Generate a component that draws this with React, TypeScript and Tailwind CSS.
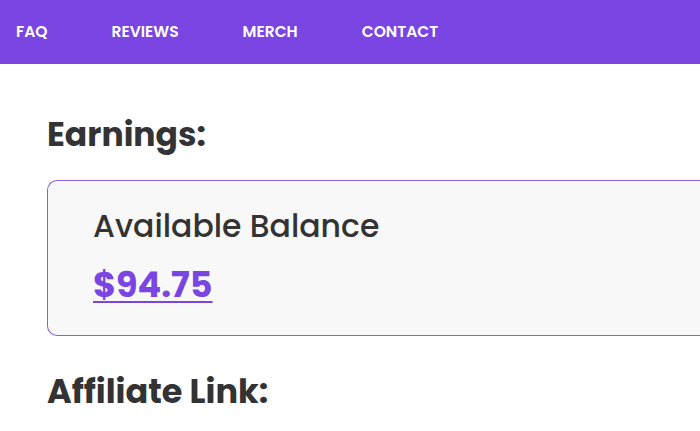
const navItems = ["FAQ", "REVIEWS", "MERCH", "CONTACT"]

export default function App() {
  return (
    <div className="min-h-screen overflow-hidden bg-white font-['Poppins','DejaVu_Sans',sans-serif] text-[#333333]">
      <header className="flex h-16 items-center gap-[64px] bg-[#7a45e2] px-4">
        {navItems.map((item) => (
          <a key={item} href="#" className="text-[15.5px] font-semibold text-white">
            {item}
          </a>
        ))}
      </header>

      <main className="pl-[47px]">
        <h2 className="mt-[51px] text-[33px] leading-[40px] font-bold">Earnings:</h2>

        <div className="mt-[25px] w-[700px] rounded-l-[10px] border border-r-0 border-[#8b5fd8] bg-[#f8f8f9] pt-[27px] pb-[30px] pl-[45px]">
          <p className="text-[31.5px] leading-[36px] font-medium">Available Balance</p>
          <a
            href="#"
            className="mt-[21px] block w-fit text-[35px] leading-[40px] font-bold text-[#7a45e2] underline decoration-2 underline-offset-[4px]"
          >
            $94.75
          </a>
        </div>

        <h2 className="mt-[36px] text-[33.5px] leading-[40px] font-bold">Affiliate Link:</h2>
      </main>
    </div>
  )
}
